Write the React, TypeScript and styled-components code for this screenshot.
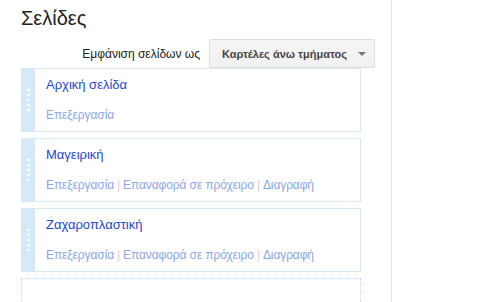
import React from "react";
import styled, { createGlobalStyle } from "styled-components";

const Global = createGlobalStyle`
  html, body { margin: 0; padding: 0; background: #fff; }
  body { font-family: "Liberation Sans", Arial, sans-serif; overflow: hidden; }
`;

const Page = styled.div`
  display: flex;
  height: 302px;
  overflow: hidden;
`;

const Main = styled.div`
  width: 340px;
  padding: 0 30px 0 21px;
  border-right: 1px solid #e5e5e5;
  height: 302px;
  overflow: hidden;
  flex-shrink: 0;
`;

const Title = styled.h2`
  margin: 0;
  padding-top: 6px;
  font-size: 20px;
  font-weight: normal;
  color: #222;
  line-height: 25px;
`;

const Toolbar = styled.div`
  display: flex;
  justify-content: flex-end;
  align-items: center;
  gap: 9px;
  margin: 8px -14px 0 0;
`;

const Label = styled.span`
  font-size: 12px;
  color: #222;
`;

const Select = styled.button`
  display: flex;
  align-items: center;
  gap: 11px;
  height: 29px;
  padding: 0 8px 0 12px;
  border: 1px solid #dcdcdc;
  border-radius: 2px;
  background: linear-gradient(#f5f5f5, #f1f1f1);
  font-family: inherit;
  font-size: 11px;
  font-weight: bold;
  color: #444;
  box-sizing: border-box;
`;

const Caret = styled.span`
  width: 0;
  height: 0;
  border-left: 4px solid transparent;
  border-right: 4px solid transparent;
  border-top: 4px solid #777;
`;

const List = styled.div`
  display: flex;
  flex-direction: column;
  gap: 6px;
`;

const Card = styled.div`
  display: flex;
  height: 64px;
  border: 1px solid #d6e9fb;
  box-sizing: border-box;
  background: #fff;
`;

const Handle = styled.div`
  width: 13px;
  flex-shrink: 0;
  background: #d6e9fb;
  display: flex;
  align-items: center;
  justify-content: center;
`;

const Grip = styled.div`
  width: 3px;
  height: 22px;
  background: repeating-linear-gradient(to bottom, rgba(255,255,255,0.95) 0 2px, transparent 2px 5px);
`;

const Body = styled.div`
  padding: 8px 0 0 11px;
  display: flex;
  flex-direction: column;
`;

const PageName = styled.a`
  font-size: 13px;
  line-height: 16px;
  color: #2346d6;
  text-decoration: none;
`;

const Actions = styled.div`
  margin-top: 14px;
  font-size: 12px;
  line-height: 16px;
  color: #8aa6ea;
  letter-spacing: -0.1px;
`;

const Sep = styled.span`
  color: #dccbdc;
  margin: 0 3px;
`;

const Placeholder = styled.div`
  height: 40px;
  border: 1px dotted #c3daf2;
  box-sizing: border-box;
`;

const pages = [
  { name: "Αρχική σελίδα", actions: ["Επεξεργασία"] },
  { name: "Μαγειρική", actions: ["Επεξεργασία", "Επαναφορά σε πρόχειρο", "Διαγραφή"] },
  { name: "Ζαχαροπλαστική", actions: ["Επεξεργασία", "Επαναφορά σε πρόχειρο", "Διαγραφή"] },
];

export default function App() {
  return (
    <Page>
      <Global />
      <Main>
        <Title>Σελίδες</Title>
        <Toolbar>
          <Label>Εμφάνιση σελίδων ως</Label>
          <Select>
            Καρτέλες άνω τμήματος
            <Caret />
          </Select>
        </Toolbar>
        <List>
          {pages.map((p) => (
            <Card key={p.name}>
              <Handle>
                <Grip />
              </Handle>
              <Body>
                <PageName>{p.name}</PageName>
                <Actions>
                  {p.actions.map((a, i) => (
                    <React.Fragment key={a}>
                      {i > 0 && <Sep>|</Sep>}
                      {a}
                    </React.Fragment>
                  ))}
                </Actions>
              </Body>
            </Card>
          ))}
          <Placeholder />
        </List>
      </Main>
    </Page>
  );
}
